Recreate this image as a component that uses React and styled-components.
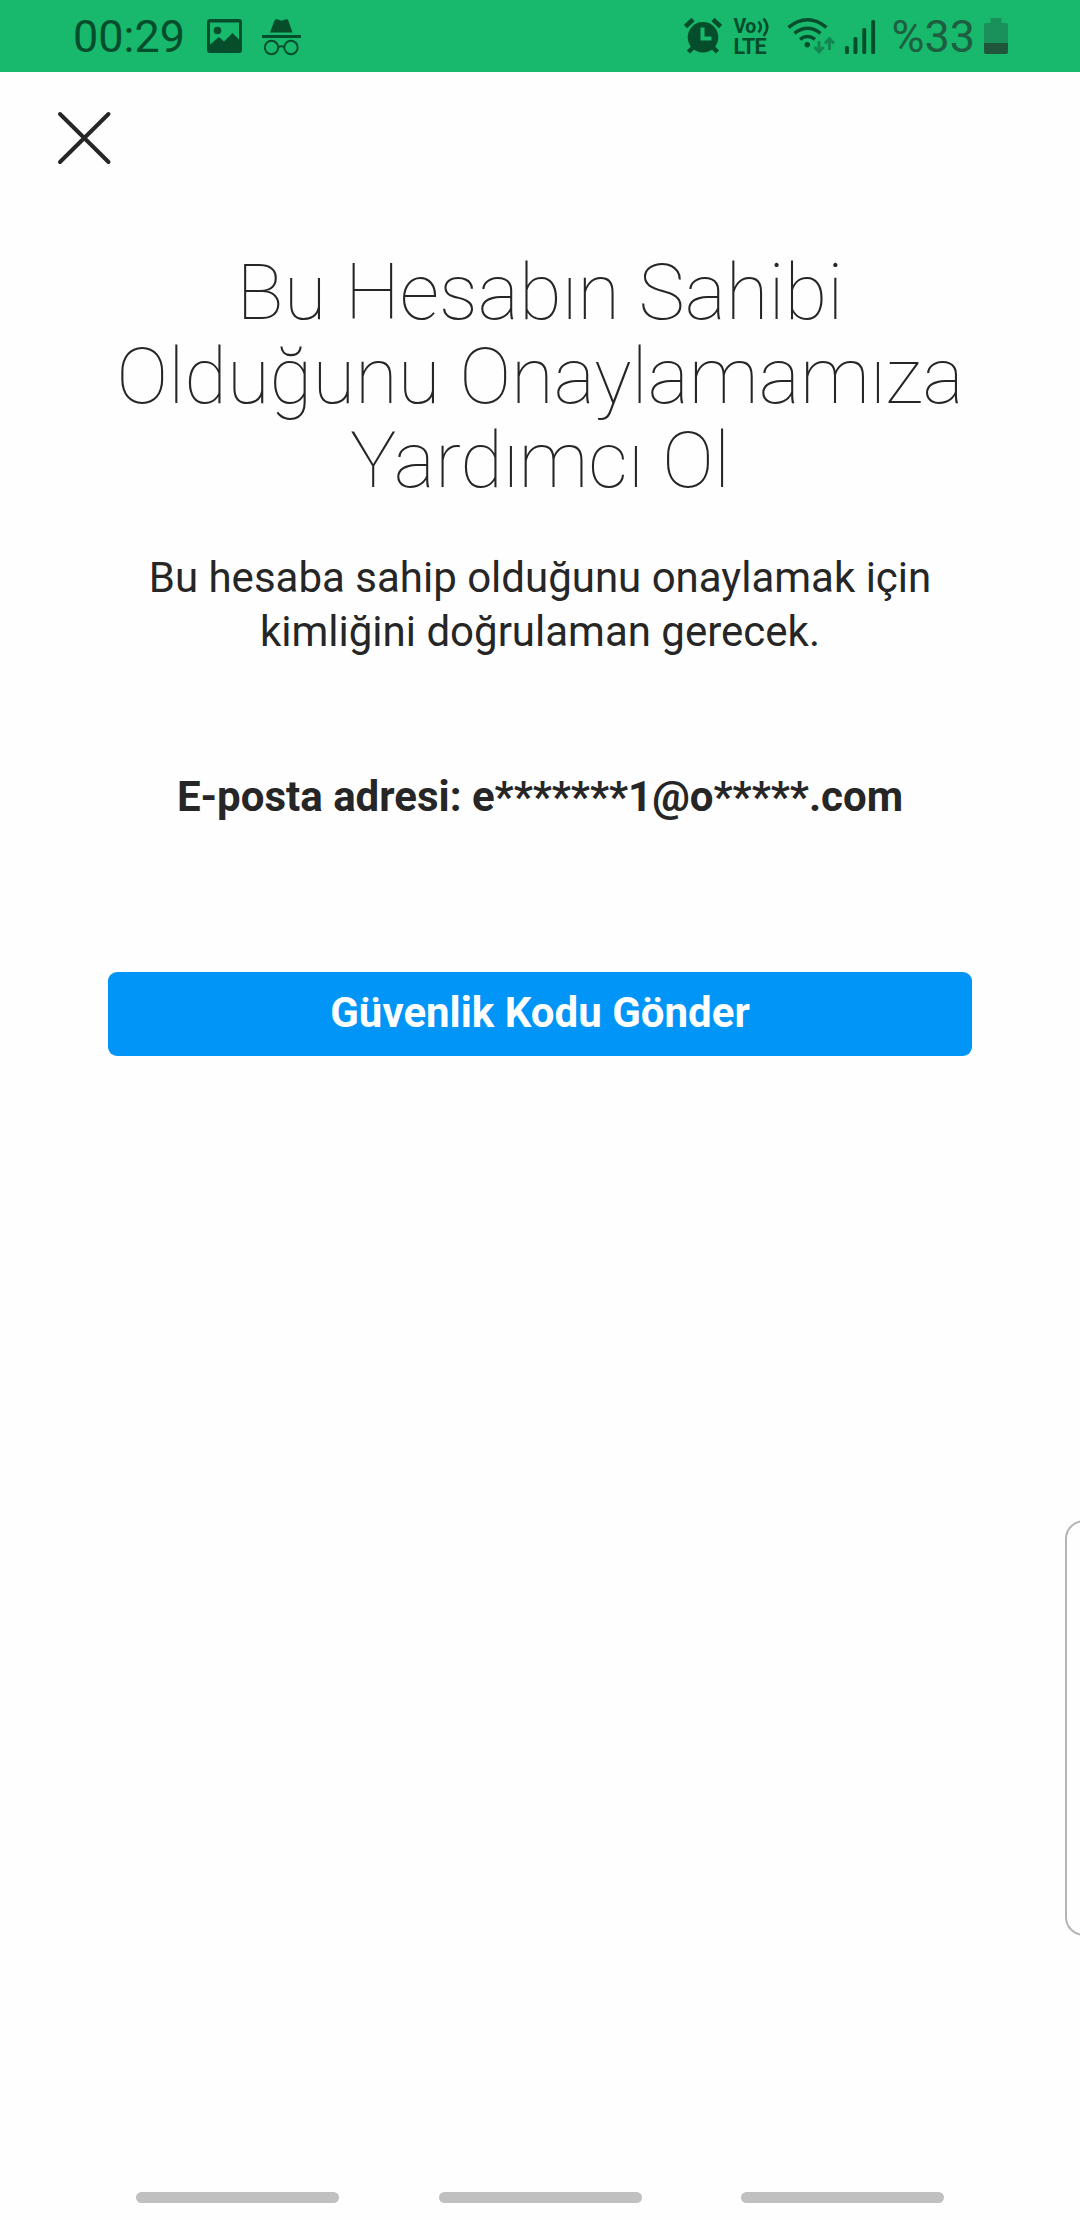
import React from "react";
import styled, { createGlobalStyle } from "styled-components";

const GlobalStyle = createGlobalStyle`
  * {
    box-sizing: border-box;
  }
  body {
    margin: 0;
    background: #fefefe;
    font-family: Roboto, "Noto Sans", sans-serif;
    color: #262626;
  }
`;

const Screen = styled.div`
  position: relative;
  display: flex;
  flex-direction: column;
  width: 1080px;
  height: 2220px;
  overflow: hidden;
  background: #fefefe;
`;

const StatusBar = styled.header`
  display: flex;
  justify-content: space-between;
  height: 72px;
  padding: 0 72px 0 73px;
  background: #18b86d;
  color: #064d2c;
`;

const StatusGroup = styled.div`
  display: flex;
  align-items: flex-start;
`;

const StatusText = styled.span`
  padding-top: 1px;
  font-size: 45px;
  line-height: 72px;
  color: ${(props) => props.$color || "#064d2c"};
  margin-left: ${(props) => props.$left || 0}px;
`;

const Icon = styled.svg`
  display: block;
  flex: none;
  width: ${(props) => props.$w}px;
  height: 72px;
  margin-left: ${(props) => props.$left || 0}px;
`;

const Volte = styled.div`
  position: relative;
  width: 37px;
  height: 72px;
  padding: 17px 0 0 1px;
  margin-left: 10px;
  font-weight: 700;
  white-space: nowrap;
`;

const VolteRow = styled.div`
  height: 20px;
  font-size: ${(props) => props.$size}px;
  line-height: 20px;
  letter-spacing: ${(props) => props.$spacing}px;
`;

const Waves = styled.svg`
  position: absolute;
  top: 17px;
  left: 25px;
  width: 13px;
  height: 20px;
`;

const TopBar = styled.nav`
  display: flex;
  padding: 38px 56px 0;
  height: 179px;
`;

const CloseButton = styled.button`
  width: 56px;
  height: 56px;
  padding: 0;
  border: 0;
  background: none;

  svg {
    display: block;
  }
`;

const Content = styled.main`
  display: flex;
  flex-direction: column;
  flex: 1;
  padding: 0 108px;
  text-align: center;
`;

const Title = styled.h1`
  margin: 0;
  font-size: 78px;
  font-weight: 100;
  line-height: 84px;
`;

const Description = styled.p`
  margin: 48px 0 0;
  font-size: 42px;
  line-height: 54px;
`;

const Email = styled.p`
  margin: 111px 0 0;
  font-size: 42px;
  font-weight: 700;
  line-height: 54px;
`;

const SubmitButton = styled.button`
  height: 84px;
  margin-top: 148px;
  padding: 0 0 3px;
  border: 0;
  border-radius: 9px;
  background: #0095f6;
  color: #fff;
  font-family: inherit;
  font-size: 42px;
  font-weight: 700;
`;

/* sits over the page, most of it is past the right edge */
const EdgePanel = styled.div`
  position: absolute;
  top: 1520px;
  right: -25px;
  width: 40px;
  height: 416px;
  border: 2px solid #b4b4b4;
  border-radius: 19px;
`;

const NavBar = styled.footer`
  display: flex;
  justify-content: center;
  gap: 99.5px;
  padding-bottom: 17px;
`;

const NavHandle = styled.div`
  width: 203px;
  height: 11px;
  border-radius: 6px;
  background: #c0c0c0;
`;

const PictureIcon = () => (
  <Icon $w={35} $left={22} viewBox="0 0 35 72" fill="currentColor">
    <path
      fillRule="evenodd"
      d="M3 19h29a3 3 0 0 1 3 3v28a3 3 0 0 1-3 3H3a3 3 0 0 1-3-3V22a3 3 0 0 1 3-3zM3 22.500V44.500L12 37l5 4.500L25.500 33 32 39.500V22.500z"
    />
    <circle cx="10.500" cy="30.500" r="3.800" />
  </Icon>
);

const IncognitoIcon = () => (
  <Icon $w={39} $left={20} viewBox="0 0 39 72" fill="currentColor">
    <path d="M8 32.500 12.500 20.500Q13.300 18.800 15 19.300L19.500 20.800 24 19.300Q25.700 18.800 26.300 20.500L30.500 32.500z" />
    <path d="M0 35h39v3H0z" />
    <g fill="none" stroke="currentColor" strokeWidth="2">
      <circle cx="9.500" cy="47.500" r="6.700" />
      <circle cx="29" cy="47.500" r="6.700" />
      <path d="M16 47q3.300-1.500 6.500 0" />
    </g>
  </Icon>
);

const AlarmIcon = () => (
  <Icon $w={38} viewBox="0 0 38 72" fill="currentColor">
    <path
      fillRule="evenodd"
      d="M19 22a15.300 15.300 0 1 1 0 30.600a15.300 15.300 0 1 1 0-30.600zM16.500 27.500V40.500H27.500V36.500H20.500V27.500z"
    />
    <g fill="none" stroke="currentColor" strokeWidth="4.500">
      <path d="M1.500 26.500 9 19.500M29 19.500l7.500 7M4.500 52l6-6M33.500 52l-6-6" />
    </g>
  </Icon>
);

const VolteIcon = () => (
  <Volte>
    <VolteRow $size={19.5} $spacing={-0.5}>
      Vo
    </VolteRow>
    <VolteRow $size={21.5} $spacing={-0.8}>
      LTE
    </VolteRow>
    <Waves viewBox="0 0 13 20" fill="none" stroke="currentColor" strokeWidth="2.600">
      <path d="M1.500 4.500q4.500 5.500 0 11M6.500 1.500q7.500 8.500 0 17.500" />
    </Waves>
  </Volte>
);

const WifiIcon = () => (
  <Icon $w={48} $left={18} viewBox="787 0 48 72" fill="none" stroke="currentColor">
    <g strokeWidth="3.500">
      <path d="M788.500 27.300q19-15 38 0" />
      <path d="M794.500 33.300q13-10 26 0" />
      <path d="M800 39.300q7.500-5.500 15 0" />
    </g>
    <circle cx="807.300" cy="44.700" r="2.700" fill="currentColor" stroke="none" />
    <g stroke="#128752" strokeWidth="3">
      <path d="M819 41v10.500M814.500 47l4.500 4.800 4.500-4.800" />
      <path d="M829.500 50V39.500M825 43.500l4.500-4.800 4.500 4.800" />
    </g>
  </Icon>
);

const SignalIcon = () => (
  <Icon $w={31} $left={10} viewBox="845 0 31 72" fill="currentColor">
    <rect x="845" y="46" width="3.900" height="8" rx="1.500" />
    <rect x="853.500" y="37" width="3.900" height="17" rx="1.500" />
    <rect x="862.300" y="28" width="3.900" height="26" rx="1.500" />
    <rect x="871.200" y="20" width="3.900" height="34" rx="1.500" />
  </Icon>
);

const BatteryIcon = () => (
  <Icon $w={24} $left={9} viewBox="0 0 24 72">
    <path fill="#1a915a" d="M6.500 18h11v5H22a2 2 0 0 1 2 2v18H0V25a2 2 0 0 1 2-2h4.500z" />
    <path fill="#20563b" d="M0 43h24v9a2 2 0 0 1-2 2H2a2 2 0 0 1-2-2z" />
  </Icon>
);

const App = () => {
  return (
    <>
      <GlobalStyle />
      <Screen>
        <StatusBar>
          <StatusGroup>
            <StatusText>00:29</StatusText>
            <PictureIcon />
            <IncognitoIcon />
          </StatusGroup>
          <StatusGroup>
            <AlarmIcon />
            <VolteIcon />
            <WifiIcon />
            <SignalIcon />
            <StatusText $left={15} $color="#1d5f40">
              %33
            </StatusText>
            <BatteryIcon />
          </StatusGroup>
        </StatusBar>

        <TopBar>
          <CloseButton aria-label="Kapat">
            <svg width="56" height="56" viewBox="0 0 56 56">
              <path
                d="M4 4l48.500 48M52.500 4L4 52"
                fill="none"
                stroke="#262626"
                strokeWidth="4"
                strokeLinecap="round"
              />
            </svg>
          </CloseButton>
        </TopBar>

        <Content>
          <Title>
            Bu Hesabın Sahibi
            <br />
            Olduğunu Onaylamamıza
            <br />
            Yardımcı Ol
          </Title>
          <Description>
            Bu hesaba sahip olduğunu onaylamak için
            <br />
            kimliğini doğrulaman gerecek.
          </Description>
          <Email>E-posta adresi: e*******1@o*****.com</Email>
          <SubmitButton>Güvenlik Kodu Gönder</SubmitButton>
        </Content>

        <EdgePanel />

        <NavBar>
          <NavHandle />
          <NavHandle />
          <NavHandle />
        </NavBar>
      </Screen>
    </>
  );
};

export default App;
